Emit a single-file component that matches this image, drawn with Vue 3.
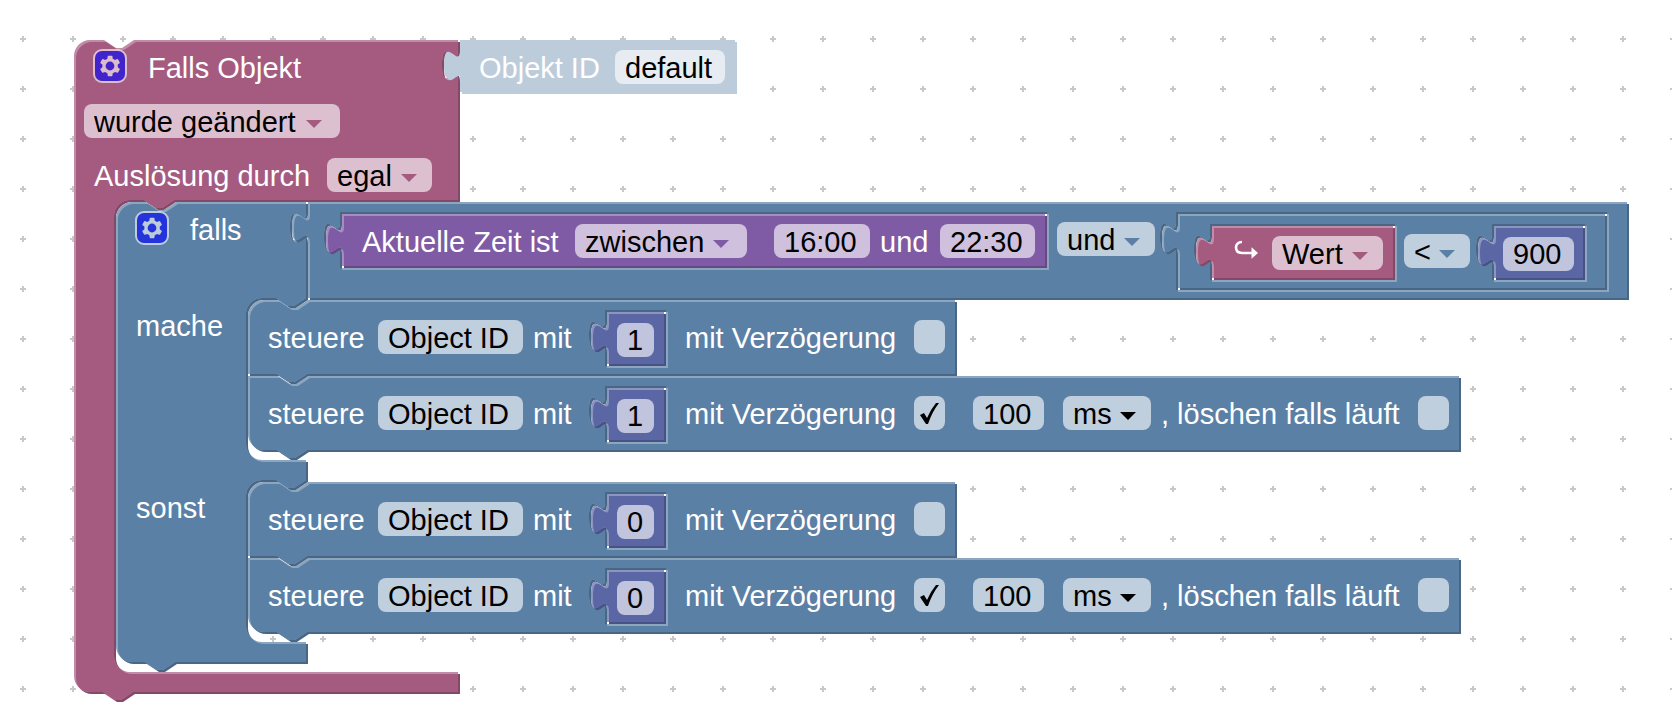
<script setup>
import { ref, reactive } from 'vue'

/* Block outlines are written in block units; one unit is two pixels. */
const NOTCH_RIGHT = 'l 6,4 3,0 6,-4'
const NOTCH_LEFT = 'l -6,4 -3,0 -6,-4'
const TAB_DOWN = 'v 5 c 0,10 -8,-8 -8,7.5 s 8,-2.5 8,7.5'
const TAB_UP = 'V 20 c 0,-10 -8,8 -8,-7.5 s 8,2.5 8,-7.5 z'

const statement = (x, top, bottom, right) =>
  `V ${top} H ${x + 30} ${NOTCH_LEFT} h -7 a 8,8 0 0,0 -8,8 V ${bottom - 8} a 8,8 0 0,0 8,8 H ${right}`

const roundTop = `M 0,8 A 8,8 0 0,1 8,0 H 15 ${NOTCH_RIGHT}`
const roundBottom = 'H 8 a 8,8 0 0,1 -8,-8 z'

const socket = (x, y, w, h) =>
  ` M ${x},${y} ${TAB_DOWN} V ${y + h} h ${w} v ${-h} z`

const valuePath = (w, h, holes = '') => `M 0,0 H ${w} V ${h} H 0 ${TAB_UP}${holes}`

const controlPath = (w, last) =>
  (last ? `M 0,0 H 15 ${NOTCH_RIGHT}` : roundTop) +
  ` H ${w} V 37 H 29.5 ${NOTCH_LEFT} ` +
  (last ? roundBottom : 'H 0 z') +
  socket(178.5, 5, 30.5, 28)

const numberPath = valuePath(28.5, 26)

const shapes = [
  {
    tone: 'pink', x: 0, y: 0,
    d: `${roundTop} H 192 ${TAB_DOWN} ${statement(20, 80, 316, 192)} V 326 H 29.5 ${NOTCH_LEFT} ${roundBottom}`,
  },
  { tone: 'ghost', x: 193, y: 0, d: valuePath(137.5, 26) },
  {
    tone: 'blue', x: 21, y: 81,
    d: `${roundTop} H 95 ${TAB_DOWN} ${statement(65, 48, 129, 95)} ${statement(65, 139, 220, 95)} V 230 H 29.5 ${NOTCH_LEFT} ${roundBottom}`,
  },
  {
    tone: 'blue', x: 117, y: 81,
    d: valuePath(659.5, 48, socket(16, 5, 353.5, 28) + socket(434, 5, 215.5, 39)),
  },
  { tone: 'violet', x: 134, y: 87, d: valuePath(351.5, 26) },
  {
    tone: 'blue', x: 552, y: 87,
    d: valuePath(213.5, 37, socket(16, 5, 92.5, 28) + socket(157, 5, 46.5, 28)),
  },
  { tone: 'pink', x: 569, y: 93, d: valuePath(90.5, 26) },
  { tone: 'indigo', x: 710, y: 93, d: valuePath(44.5, 26) },
  { tone: 'blue', x: 87, y: 130, d: controlPath(353.5, false) },
  { tone: 'indigo', x: 266.5, y: 136, d: numberPath },
  { tone: 'blue', x: 87, y: 168, d: controlPath(605.5, true) },
  { tone: 'indigo', x: 266.5, y: 174, d: numberPath },
  { tone: 'blue', x: 87, y: 221, d: controlPath(353.5, false) },
  { tone: 'indigo', x: 266.5, y: 227, d: numberPath },
  { tone: 'blue', x: 87, y: 259, d: controlPath(605.5, true) },
  { tone: 'indigo', x: 266.5, y: 265, d: numberPath },
]

const gear =
  'm4.203,7.296 0,1.368 -0.92,0.677 -0.11,0.41 0.9,1.559 0.41,0.11 1.043,-0.457 1.187,0.683 0.127,1.134 0.3,0.3 1.8,0 0.3,-0.299 0.127,-1.138 1.185,-0.682 1.046,0.458 0.409,-0.11 0.9,-1.559 -0.11,-0.41 -0.92,-0.677 0,-1.366 0.92,-0.677 0.11,-0.41 -0.9,-1.559 -0.409,-0.109 -1.046,0.458 -1.185,-0.682 -0.127,-1.138 -0.3,-0.299 -1.8,0 -0.3,0.3 -0.126,1.135 -1.187,0.682 -1.043,-0.457 -0.41,0.11 -0.899,1.559 0.108,0.409z'

const trigger = ref('default')
const from = ref('16:00')
const to = ref('22:30')
const limit = ref('900')

const branches = reactive([
  {
    name: 'mache',
    steps: [
      { id: 'm1', value: '1', delayed: false },
      { id: 'm2', value: '1', delayed: true, delay: '100', clear: false },
    ],
  },
  {
    name: 'sonst',
    steps: [
      { id: 's1', value: '0', delayed: false },
      { id: 's2', value: '0', delayed: true, delay: '100', clear: false },
    ],
  },
])
</script>

<template>
  <main class="workspace">
    <svg class="dots" aria-hidden="true">
      <defs>
        <pattern id="dots" width="50" height="50" patternUnits="userSpaceOnUse">
          <path d="M20 39h6M23 36v6" stroke="#c8c8c8" stroke-width="2" />
        </pattern>
      </defs>
      <rect width="100%" height="100%" fill="url(#dots)" />
    </svg>

    <section class="program">
      <svg class="shapes" viewBox="0 0 778 332" width="1556" height="664" aria-hidden="true">
        <g
          v-for="(s, i) in shapes"
          :key="i"
          :class="s.tone"
          :transform="`translate(${s.x},${s.y})`"
        >
          <clipPath :id="`edge-${i}`"><path :d="s.d" clip-rule="evenodd" /></clipPath>
          <path class="shade" :d="s.d" transform="translate(1,1)" />
          <path class="light" :d="s.d" />
          <g :clip-path="`url(#edge-${i})`">
            <path class="face" :d="s.d" transform="translate(1,1)" />
          </g>
        </g>
      </svg>

      <div class="event">
        <div class="event-head">
          <div class="title">
            <button class="gear" type="button" aria-label="Falls Objekt einstellen">
              <svg viewBox="-0.5 -0.5 17 17" width="34" height="34">
                <rect width="16" height="16" rx="4" fill="#00f" stroke="#fff" />
                <path :d="gear" fill="#fff" />
                <circle cx="8" cy="8" r="2.2" fill="#00f" />
              </svg>
            </button>
            <span class="text">Falls Objekt</span>
          </div>
          <div class="object-id">
            <label class="text" for="trigger">Objekt ID</label>
            <input id="trigger" v-model="trigger" class="chip" type="text" />
          </div>
        </div>

        <div class="event-change">
          <span class="drop pink wide">
            <select class="chip" aria-label="Bedingung"><option>wurde geändert</option></select>
            <svg class="caret" viewBox="0 0 16 8"><path d="M0 0h16l-8 8z" /></svg>
          </span>
        </div>

        <div class="event-source">
          <label class="text" for="source">Auslösung durch</label>
          <span class="drop pink">
            <select id="source" class="chip"><option>egal</option></select>
            <svg class="caret" viewBox="0 0 16 8"><path d="M0 0h16l-8 8z" /></svg>
          </span>
        </div>
      </div>

      <div class="condition">
        <div class="condition-head">
          <div class="title">
            <button class="gear" type="button" aria-label="falls einstellen">
              <svg viewBox="-0.5 -0.5 17 17" width="34" height="34">
                <rect width="16" height="16" rx="4" fill="#00f" stroke="#fff" />
                <path :d="gear" fill="#fff" />
                <circle cx="8" cy="8" r="2.2" fill="#00f" />
              </svg>
            </button>
            <span class="text">falls</span>
          </div>

          <div class="both">
            <div class="time">
              <label class="text" for="range">Aktuelle Zeit ist</label>
              <span class="drop violet wide">
                <select id="range" class="chip"><option>zwischen</option></select>
                <svg class="caret" viewBox="0 0 16 8"><path d="M0 0h16l-8 8z" /></svg>
              </span>
              <input v-model="from" class="chip" type="text" aria-label="Von" />
              <label class="text" for="to">und</label>
              <input id="to" v-model="to" class="chip" type="text" />
            </div>
            <span class="drop blue">
              <select class="chip" aria-label="Verknüpfung"><option>und</option></select>
              <svg class="caret" viewBox="0 0 16 8"><path d="M0 0h16l-8 8z" /></svg>
            </span>
            <div class="compare">
              <div class="source">
                <svg class="hook" viewBox="0 0 24 22" width="24" height="22" aria-hidden="true">
                  <path d="M8 3C4 3 2 5.6 2 8.6s2 5.4 6 5.4h11" fill="none" stroke="#fff" stroke-width="2.6" />
                  <path d="M17.5 8.2l6.5 5.8-6.5 5.8z" fill="#fff" />
                </svg>
                <span class="drop pink">
                  <select class="chip" aria-label="Quelle"><option>Wert</option></select>
                  <svg class="caret" viewBox="0 0 16 8"><path d="M0 0h16l-8 8z" /></svg>
                </span>
              </div>
              <span class="drop blue">
                <select class="chip" aria-label="Vergleich"><option>&lt;</option></select>
                <svg class="caret" viewBox="0 0 16 8"><path d="M0 0h16l-8 8z" /></svg>
              </span>
              <div class="number">
                <input v-model="limit" class="chip" type="text" aria-label="Grenzwert" />
              </div>
            </div>
          </div>
        </div>

        <div v-for="branch in branches" :key="branch.name" class="branch">
          <span class="text">{{ branch.name }}</span>
          <div class="steps">
            <div v-for="step in branch.steps" :key="step.id" class="step">
              <span class="text">steuere</span>
              <button class="chip" type="button">Object ID</button>
              <label class="text" :for="`${step.id}-value`">mit</label>
              <div class="number">
                <input :id="`${step.id}-value`" v-model="step.value" class="chip" type="text" />
              </div>
              <label class="text" :for="`${step.id}-delayed`">mit Verzögerung</label>
              <input :id="`${step.id}-delayed`" v-model="step.delayed" class="chip tick" type="checkbox" />
              <template v-if="'delay' in step">
                <input v-model="step.delay" class="chip" type="text" aria-label="Verzögerung" />
                <span class="drop">
                  <select class="chip" aria-label="Einheit"><option>ms</option></select>
                  <svg class="caret" viewBox="0 0 16 8"><path d="M0 0h16l-8 8z" /></svg>
                </span>
                <label class="text" :for="`${step.id}-clear`">, löschen falls läuft</label>
                <input :id="`${step.id}-clear`" v-model="step.clear" class="chip tick" type="checkbox" />
              </template>
            </div>
          </div>
        </div>
      </div>
    </section>
  </main>
</template>

<style>
body {
  margin: 0;
  background: #fff;
}
</style>

<style scoped>
.workspace {
  position: relative;
  display: flow-root;
  box-sizing: border-box;
  min-height: 100vh;
  overflow: hidden;
  font: 29px/36px "Liberation Sans", Arial, Helvetica, sans-serif;
  color: #000;
}

.dots {
  position: absolute;
  inset: 0;
  width: 100%;
  height: 100%;
}

.program {
  position: relative;
  width: max-content;
  margin: 40px 0 0 74px;
}

.shapes {
  position: absolute;
  top: 0;
  left: 0;
  overflow: visible;
  fill-rule: evenodd;
}

.event,
.condition {
  position: relative;
}

.pink { --face: #a55b80; --light: #c08ca6; --shade: #844966; }
.blue { --face: #5b80a5; --light: #8ca6c0; --shade: #496684; }
.violet { --face: #805ba5; --light: #a68cc0; --shade: #664984; }
.indigo { --face: #5b67a5; --light: #8c95c0; --shade: #495284; }
.ghost { --face: #bdccdb; --light: #bdccdb; --shade: #bdccdb; }

.face { fill: var(--face); }
.light { fill: var(--light); }
.shade { fill: var(--shade); }

.text {
  height: 34px;
  color: #fff;
  white-space: pre;
}

.chip {
  box-sizing: border-box;
  width: 100%;
  height: 34px;
  margin: 0;
  padding: 2px 0 0 10px;
  border: 0;
  border-radius: 8px;
  outline: 0;
  appearance: none;
  background: rgba(255, 255, 255, 0.62);
  font: inherit;
  line-height: 32px;
  color: #000;
  text-align: left;
  white-space: nowrap;
}

.drop {
  position: relative;
  display: block;
  height: 34px;
}

.drop .chip {
  display: block;
}

.caret {
  position: absolute;
  top: 16px;
  right: 15px;
  width: 16px;
  height: 8px;
  fill: var(--face, #000);
  pointer-events: none;
}

.wide .caret {
  right: 18px;
}

.gear {
  width: 34px;
  height: 34px;
  padding: 0;
  border: 0;
  background: none;
  opacity: 0.6;
}

.gear svg {
  display: block;
}

.title {
  display: flex;
  gap: 21px;
  padding: 9px 19px 0;
}

.title .text {
  padding-top: 1px;
}

.event-head {
  display: grid;
  grid-template-columns: 386px max-content;
  height: 64px;
}

.object-id {
  display: grid;
  grid-template-columns: 136px 110px;
  padding: 10px 19px 0;
}

.event-change {
  display: grid;
  grid-template-columns: 256px;
  height: 54px;
  padding-left: 10px;
}

.event-source {
  display: grid;
  grid-template-columns: 233px 105px;
  height: 44px;
  padding-left: 20px;
}

.condition {
  margin-left: 42px;
}

.condition-head {
  display: grid;
  grid-template-columns: 192px max-content;
  height: 98px;
}

.both {
  display: grid;
  grid-template-columns: 715px 98px max-content;
  align-items: start;
  padding: 12px 0 0 34px;
}

.both > .drop,
.compare > .drop {
  margin-top: 8px;
}

.time {
  display: grid;
  grid-template-columns: 213px 172px 96px 60px 95px;
  padding: 10px 20px;
}

.time .drop + .chip {
  margin-left: 27px;
}

.time .chip + .text,
.time .text + .chip {
  margin-left: 37px;
}

.compare {
  display: grid;
  grid-template-columns: 192px 66px max-content;
  align-items: start;
  padding: 12px 0 0 57px;
}

.source {
  display: grid;
  grid-template-columns: 38px 111px;
  padding: 10px 22px;
}

.hook {
  margin-top: 3px;
}

.number {
  padding: 10px 9px;
}

.compare .number {
  width: 71px;
  margin-left: 24px;
}

.branch {
  display: grid;
  grid-template-columns: 132px max-content;
  height: 182px;
}

.branch > .text {
  padding: 8px 20px 0;
}

.step {
  display: grid;
  grid-template-columns: 110px 145px 85px 55px 22px 229px 31px 28px 71px 19px 88px 10px 257px 31px;
  align-items: start;
  height: 56px;
  padding: 20px 0 0 20px;
}

.step > :nth-child(3) {
  padding-left: 10px;
}

.step .number {
  margin-top: -8px;
}

.step > :nth-child(5) {
  grid-column: 6;
}

.step > :nth-child(7) {
  grid-column: 9;
}

.step > :nth-child(8) {
  grid-column: 11;
}

.step > :nth-child(9) {
  grid-column: 13;
}

.tick {
  padding: 0;
}

.tick:checked::before {
  display: block;
  width: 31px;
  height: 34px;
  background: #000;
  clip-path: path("M6 19l4 -2l3 5q4 -9 9 -15h3q-7 9 -11 21h-2z");
  content: "";
}
</style>
